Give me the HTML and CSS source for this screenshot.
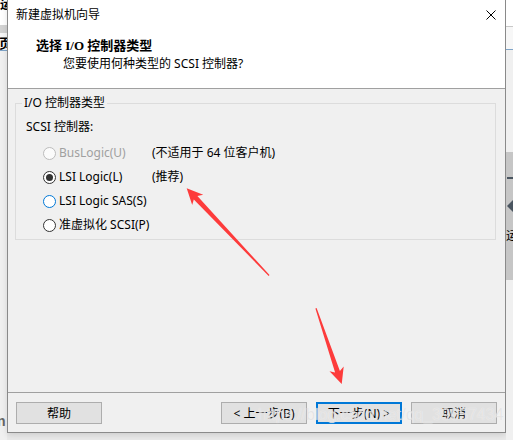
FILE: index.html
```html
<!DOCTYPE html>
<html lang="zh-CN">
<head>
    <meta charset="UTF-8">
    <title>新建虚拟机向导</title>
    <link rel="stylesheet" href="styles.css">
</head>
<body>
    <div class="screen">
        <div class="bg-left">
            <div class="bl-top"><span class="bl-char">运</span></div>
            <div class="bl-band"></div>
            <div class="bl-tab"><span class="bl-page">页</span></div>
            <div class="bl-rest"><span class="bl-n">n</span></div>
        </div>

        <div class="dialog">
            <div class="titlebar">
                <span class="title">新建虚拟机向导</span>
                <svg class="close" width="10" height="10" viewBox="0 0 10 10">
                    <path d="M0.5 0.5 L9.5 9.5 M9.5 0.5 L0.5 9.5" stroke="#000" stroke-width="1" fill="none"/>
                </svg>
            </div>

            <div class="header">
                <div class="h-title">选择 I/O 控制器类型</div>
                <div class="h-sub">您要使用何种类型的 SCSI 控制器?</div>
            </div>

            <div class="content">
                <fieldset class="group">
                    <legend>I/O 控制器类型</legend>
                    <div class="group-label">SCSI 控制器:</div>
                    <div class="options">
                        <div class="option disabled">
                            <span class="radio"></span>
                            <span class="opt-name">BusLogic(U)</span>
                            <span class="opt-note">(不适用于 64 位客户机)</span>
                        </div>
                        <div class="option">
                            <span class="radio checked"></span>
                            <span class="opt-name">LSI Logic(L)</span>
                            <span class="opt-note">(推荐)</span>
                        </div>
                        <div class="option">
                            <span class="radio hover"></span>
                            <span class="opt-name">LSI Logic SAS(S)</span>
                        </div>
                        <div class="option">
                            <span class="radio"></span>
                            <span class="opt-name">准虚拟化 SCSI(P)</span>
                        </div>
                    </div>
                </fieldset>
            </div>

            <div class="footer">
                <button class="btn">帮助</button>
                <div class="spacer"></div>
                <button class="btn">&lt; 上一步(B)</button>
                <button class="btn focused">下一步(N) &gt;</button>
                <button class="btn">取消</button>
            </div>
        </div>

        <div class="bg-right">
            <div class="br-top"></div>
            <div class="br-tab"></div>
            <div class="br-gap"></div>
            <div class="br-panel">
                <span class="br-dash"></span>
                <span class="br-tri"></span>
                <span class="br-char">运</span>
            </div>
            <div class="br-rest"></div>
        </div>

        <div class="watermark">https://blog.csdn.net/qq_39057434</div>

        <svg class="arrows" width="513" height="440" viewBox="0 0 513 440">
            <polygon points="186.7,188.3 203.2,194.8 197.4,196.0 269.5,275.1 268.7,275.9 193.8,199.5 192.2,205.1" fill="#fd3b3b"/>
            <polygon points="341.7,384 343.7,366.5 339.9,370.9 316.6,308.1 315.4,308.5 335.1,372.5 329.5,371.3" fill="#fd3b3b"/>
        </svg>
    </div>
</body>
</html>
```

FILE: styles.css
```css
:root {
    --dialog-bg: #f0f0f0;
    --white: #fff;
    --line: #a0a0a0;
    --group-line: #dcdcdc;
    --btn-bg: #e1e1e1;
    --btn-border: #adadad;
    --focus: #0078d7;
    --disabled: #a0a0a0;
    --ui-font: "Noto Sans", "Noto Sans CJK SC", sans-serif;
}

body {
    margin: 0;
    width: 513px;
    height: 440px;
    overflow: hidden;
    background: #e9e9e9;
    font-family: var(--ui-font);
    font-size: 12px;
    color: #000;
}

.screen {
    position: relative;
    display: flex;
    align-items: flex-start;
    width: 513px;
    height: 440px;
}

/* window behind the dialog */
.bg-left {
    width: 7px;
    height: 440px;
    display: flex;
    flex-direction: column;
    overflow: hidden;
    background: var(--dialog-bg);
}

.bl-top {
    height: 25px;
    background: var(--white);
    overflow: hidden;
}

.bl-char {
    display: block;
    font-family: "Noto Sans CJK SC", sans-serif;
    font-weight: bold;
    font-size: 12px;
    line-height: 12px;
    margin-top: -2px;
}

.bl-band {
    height: 8px;
    background: #d2d2d2;
}

.bl-tab {
    height: 17px;
    background: #f7f7f7;
    border-bottom: 1px solid #7fa4c8;
    overflow: hidden;
}

.bl-page {
    display: block;
    font-family: "Noto Sans CJK SC", sans-serif;
    font-weight: bold;
    font-size: 13px;
    line-height: 14px;
    margin: 3px 0 0 -1px;
}

.bl-rest {
    flex: 1;
    display: flex;
    flex-direction: column;
    justify-content: flex-end;
    padding-bottom: 12px;
}

.bl-n {
    font-family: "Liberation Sans", sans-serif;
    font-weight: bold;
    font-size: 14px;
    line-height: 14px;
    color: #666;
    margin-left: -3px;
}

.bg-right {
    flex: 1;
    height: 440px;
    display: flex;
    flex-direction: column;
    overflow: hidden;
    background: var(--dialog-bg);
}

.br-top {
    height: 26px;
    background: var(--white);
    border-bottom: 1px solid #c8c8c8;
}

.br-tab {
    height: 22px;
    background: #f7f7f7;
    border-bottom: 1px solid #7fa4c8;
}

.br-gap {
    height: 102px;
}

.br-panel {
    height: 128px;
    background: #c6c6c6;
    display: flex;
    flex-direction: column;
    padding-left: 1px;
}

.br-dash {
    width: 6px;
    height: 2px;
    background: #4a5560;
    margin-top: 25px;
}

.br-tri {
    width: 0;
    height: 0;
    border-top: 6px solid transparent;
    border-bottom: 6px solid transparent;
    border-right: 6px solid #4a5560;
    margin-top: 21px;
}

.br-char {
    font-family: "Noto Sans CJK SC", sans-serif;
    font-size: 12px;
    line-height: 14px;
    margin-top: 16px;
    margin-left: -1px;
}

.br-rest {
    flex: 1;
}

/* dialog */
.dialog {
    width: 499px;
    height: 433px;
    box-sizing: border-box;
    border: 1px solid #8a8a8a;
    border-top: none;
    background: var(--dialog-bg);
    display: flex;
    flex-direction: column;
    box-shadow: 0 2px 6px rgba(0, 0, 0, 0.12);
}

.titlebar {
    height: 30px;
    background: var(--white);
    display: flex;
    align-items: center;
    justify-content: space-between;
    padding: 0 9px 0 8px;
}

.title {
    line-height: 16px;
}

.close {
    display: block;
}

.header {
    height: 59px;
    box-sizing: border-box;
    background: var(--white);
    border-bottom: 1px solid var(--line);
    padding: 7px 0 0 28px;
}

.h-title {
    font-family: "Liberation Serif", "Noto Sans CJK SC", serif;
    font-weight: bold;
    font-size: 13px;
    line-height: 18px;
}

.h-sub {
    line-height: 18px;
    padding-left: 27px;
}

.content {
    flex: 1;
}

.group {
    margin: 6px 9px 0 7px;
    padding: 0 0 2px 0;
    border: 1px solid var(--group-line);
    min-width: 0;
}

.group legend {
    margin-left: 6px;
    padding: 0 2px;
    line-height: 16px;
}

.group-label {
    margin-top: 6px;
    padding-left: 10px;
    line-height: 20px;
}

.options {
    margin-top: 4px;
    padding-left: 27px;
}

.option {
    height: 24px;
    display: flex;
    align-items: center;
}

.radio {
    width: 13px;
    height: 13px;
    box-sizing: border-box;
    border: 1px solid #333;
    border-radius: 50%;
    background: var(--white);
    margin-right: 3px;
    display: flex;
    align-items: center;
    justify-content: center;
    flex-shrink: 0;
}

.radio.checked::after {
    content: "";
    width: 7px;
    height: 7px;
    border-radius: 50%;
    background: #333;
}

.radio.hover {
    border-color: var(--focus);
}

.option.disabled .radio {
    border-color: #bcbcbc;
    background: #fbfbfb;
}

.opt-name {
    width: 93px;
    line-height: 16px;
    white-space: nowrap;
}

.option.disabled .opt-name {
    color: var(--disabled);
}

.opt-note {
    line-height: 16px;
    white-space: nowrap;
}

.footer {
    height: 40px;
    box-sizing: border-box;
    border-top: 1px solid var(--line);
    padding: 9px 8px 0;
    display: flex;
    align-items: flex-start;
    gap: 9px;
}

.spacer {
    flex: 1;
}

.btn {
    width: 86px;
    height: 22px;
    box-sizing: border-box;
    padding: 0;
    background: var(--btn-bg);
    border: 1px solid var(--btn-border);
    font-family: var(--ui-font);
    font-size: 12px;
    color: #000;
}

.btn.focused {
    border: 2px solid var(--focus);
}

/* overlays from the screenshot tool */
.watermark {
    position: absolute;
    left: 258px;
    top: 405px;
    font-family: "Liberation Sans", sans-serif;
    font-size: 16px;
    line-height: 20px;
    color: rgba(215, 215, 215, 0.6);
    text-shadow: 0 0 1px rgba(255, 255, 255, 0.8);
    white-space: nowrap;
}

.arrows {
    position: absolute;
    left: 0;
    top: 0;
    pointer-events: none;
}
```
